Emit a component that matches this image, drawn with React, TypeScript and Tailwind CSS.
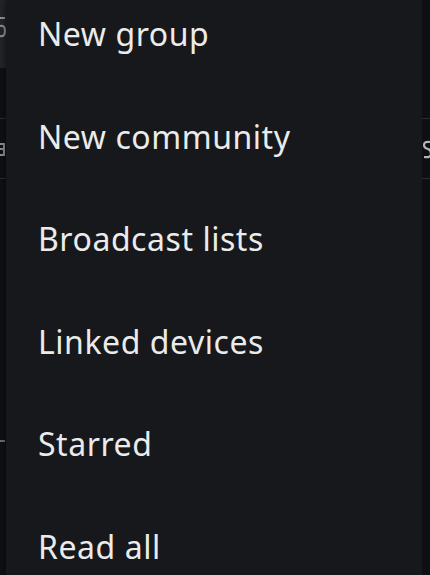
import React from "react";

const items = [
  "New group",
  "New community",
  "Broadcast lists",
  "Linked devices",
  "Starred",
  "Read all",
];

// slivers of the chat list peeking out beside the popup
function LeftEdge() {
  return (
    <div className="w-[6px] flex flex-col bg-[#0e1012]">
      <div className="h-[68px] bg-[#222427] flex items-start pt-[16px]">
        <svg width="6" height="22" viewBox="0 0 6 22">
          <path d="M0 2 H5 M0 10 Q5 9 5 15 Q5 21 0 20" stroke="#8f9195" strokeWidth="2" fill="none" />
        </svg>
      </div>
      <div className="h-[50px]" />
      <div className="h-px bg-[#2a2c2f]" />
      <div className="h-[59px] flex items-center">
        <svg width="6" height="16" viewBox="0 0 6 16">
          <path d="M0 3 H4 V14 H0 M0 8 H4" stroke="#8a8c90" strokeWidth="2" fill="none" />
        </svg>
      </div>
      <div className="h-px bg-[#2a2c2f]" />
      <div className="h-[261px]" />
      <div className="h-[2px] w-[5px] bg-[#6a6c70]" />
    </div>
  );
}

function RightEdge() {
  return (
    <div className="w-[8px] flex flex-col bg-[#0d0f11]">
      <div className="h-[118px]" />
      <div className="h-px bg-[#2a2c2f]" />
      <div className="h-[59px] flex items-center">
        <svg width="8" height="20" viewBox="0 0 8 20">
          <path d="M8 3 Q2 2 2 6 Q2 9 6 10 Q9 11 9 15 Q9 19 2 18" stroke="#b5b7ba" strokeWidth="2.2" fill="none" />
        </svg>
      </div>
      <div className="h-px bg-[#2a2c2f]" />
    </div>
  );
}

export default function App() {
  return (
    <div className="w-[430px] h-[575px] overflow-hidden flex bg-[#0e1012] font-['Noto_Sans',sans-serif]">
      <LeftEdge />

      {/* popup menu */}
      <div className="flex-1 bg-[#16181b] shadow-[0_0_6px_rgba(0,0,0,0.6)]">
        <ul className="flex flex-col pt-[4px]">
          {items.map((label) => (
            <li
              key={label}
              className="h-[102.6px] flex items-start pl-[32px] pt-[10px] text-[32px] leading-[40px] text-[#ebebeb] tracking-[0.55px]"
            >
              {label}
            </li>
          ))}
        </ul>
      </div>

      <RightEdge />
    </div>
  );
}
